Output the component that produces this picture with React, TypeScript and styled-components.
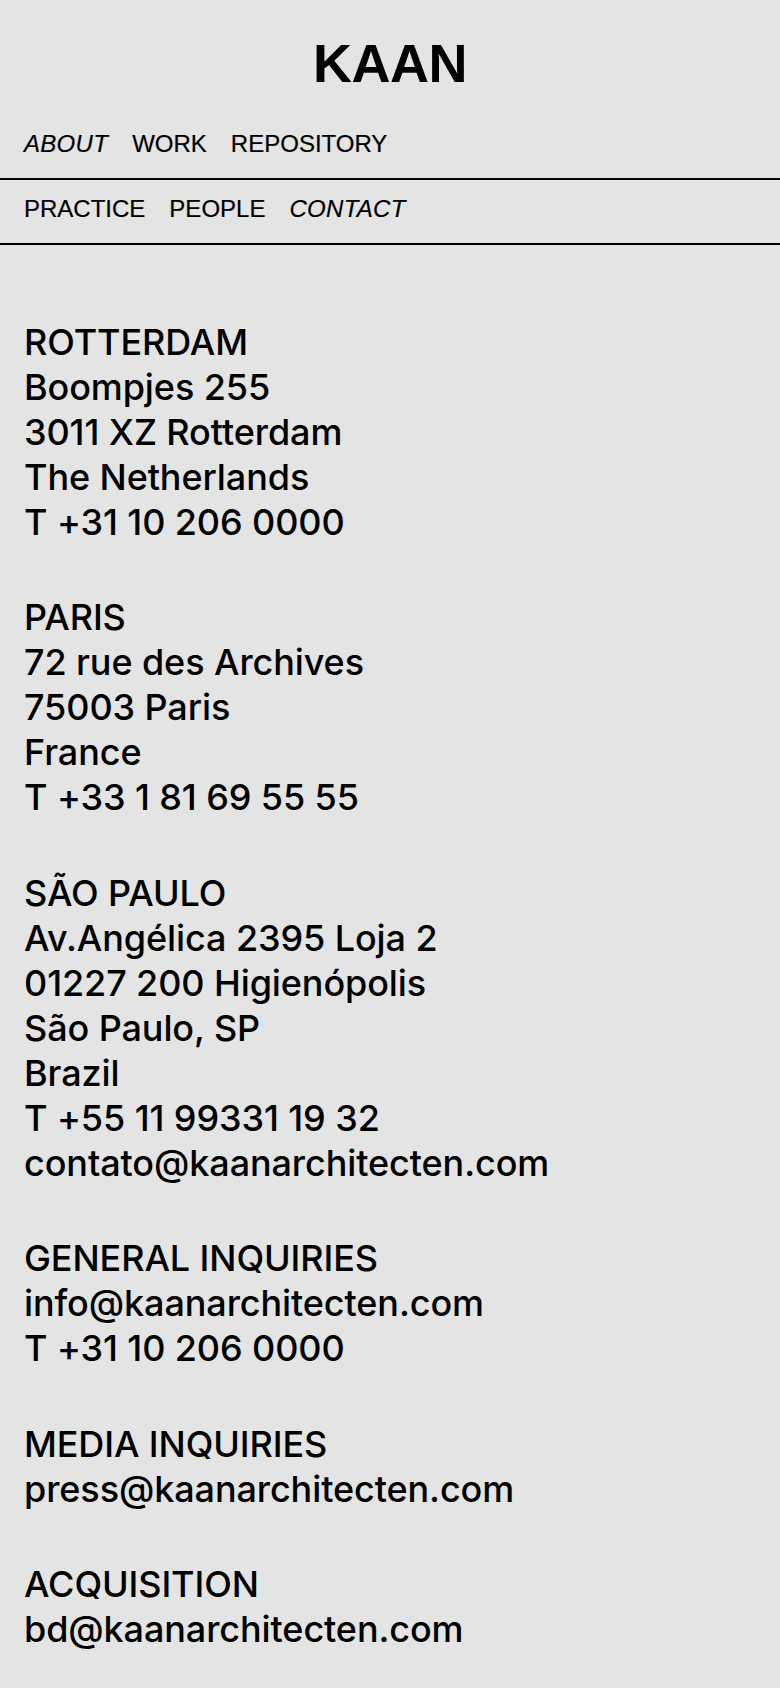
import React from 'react';
import styled, { createGlobalStyle } from 'styled-components';

const GlobalStyle = createGlobalStyle`
  html, body {
    margin: 0;
    padding: 0;
    background: #e3e4e3;
  }
  body {
    color: #000;
    font-family: "Liberation Sans", Arial, sans-serif;
  }
`;

const Page = styled.div`
  min-height: 1688px;
  background: #e3e4e3;
`;

const Header = styled.header`
  display: flex;
  justify-content: center;
  padding-top: 36px;
  height: 79px;
`;

const Logo = styled.div`
  font-family: "Liberation Sans", Arial, sans-serif;
  font-weight: 700;
  font-size: 54px;
  line-height: 54px;
  letter-spacing: -0.5px;
`;

const NavRow = styled.nav`
  display: flex;
  gap: 24px;
  padding: 15px 24px 21px;
  border-bottom: 2px solid #000;
`;

const NavLink = styled.a<{ $active?: boolean }>`
  font-size: 24px;
  line-height: 27px;
  font-style: ${p => (p.$active ? 'italic' : 'normal')};
  letter-spacing: ${p => (p.$active ? '0.3px' : '0')};
  color: #000;
  text-decoration: none;
  -webkit-text-stroke: 0.2px #000;
`;

const Content = styled.main`
  padding: 75px 24px 40px;
  font-family: Inter, "Liberation Sans", sans-serif;
  font-weight: 450;
  font-size: 36px;
  line-height: 45px;
  letter-spacing: -0.1px;
`;

const Block = styled.section`
  margin-bottom: 50.4px;
`;

const Line = styled.div`
  white-space: nowrap;
`;

const offices: string[][] = [
  ['ROTTERDAM', 'Boompjes 255', '3011 XZ Rotterdam', 'The Netherlands', 'T +31 10 206 0000'],
  ['PARIS', '72 rue des Archives', '75003 Paris', 'France', 'T +33 1 81 69 55 55'],
  [
    'SÃO PAULO',
    'Av.Angélica 2395 Loja 2',
    '01227 200 Higienópolis',
    'São Paulo, SP',
    'Brazil',
    'T +55 11 99331 19 32',
    'contato@kaanarchitecten.com',
  ],
  ['GENERAL INQUIRIES', 'info@kaanarchitecten.com', 'T +31 10 206 0000'],
  ['MEDIA INQUIRIES', 'press@kaanarchitecten.com'],
  ['ACQUISITION', 'bd@kaanarchitecten.com'],
];

export default function App() {
  return (
    <Page>
      <GlobalStyle />
      <Header>
        <Logo>KAAN</Logo>
      </Header>
      <NavRow>
        <NavLink $active>ABOUT</NavLink>
        <NavLink>WORK</NavLink>
        <NavLink>REPOSITORY</NavLink>
      </NavRow>
      <NavRow>
        <NavLink>PRACTICE</NavLink>
        <NavLink>PEOPLE</NavLink>
        <NavLink $active>CONTACT</NavLink>
      </NavRow>
      <Content>
        {offices.map((lines, i) => (
          <Block key={i}>
            {lines.map(l => (
              <Line key={l}>{l}</Line>
            ))}
          </Block>
        ))}
      </Content>
    </Page>
  );
}
